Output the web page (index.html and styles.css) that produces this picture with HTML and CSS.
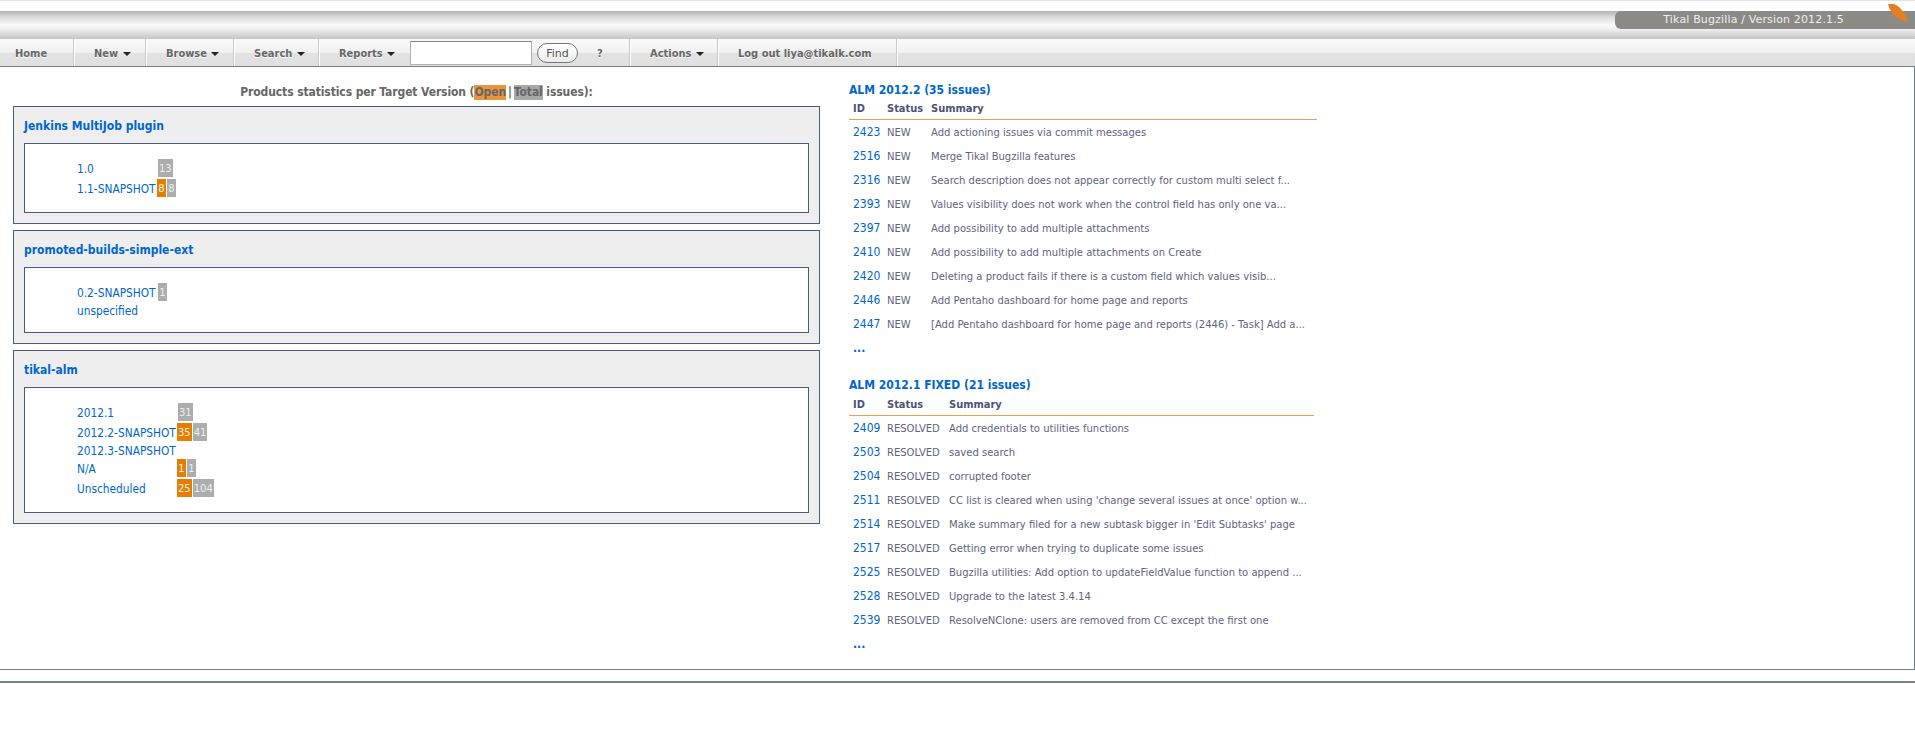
FILE: index.html
```html
<!DOCTYPE html>
<html lang="en">
<head>
  <meta charset="UTF-8">
  <title>Tikal Bugzilla</title>
  <link rel="stylesheet" href="styles.css">
</head>
<body>
  <header class="banner">
    <div class="version">Tikal Bugzilla / Version 2012.1.5</div>
    <svg class="leaf" width="22" height="20" viewBox="0 0 22 20"><path d="M1 0 L7 0 C14 3 19 10 21 18 C12 16 4 12 1 0Z" fill="#e67e22"/></svg>
  </header>
  <nav class="menu">
    <a class="item w-home">Home</a>
    <a class="item w-new">New <i class="caret"></i></a>
    <a class="item w-browse">Browse <i class="caret"></i></a>
    <a class="item w-search">Search <i class="caret"></i></a>
    <a class="item w-reports">Reports <i class="caret"></i></a>
    <input class="quick" type="text">
    <button class="find">Find</button>
    <a class="item w-help">?</a>
    <a class="item w-actions">Actions <i class="caret"></i></a>
    <a class="item w-logout">Log out liya@tikalk.com</a>
  </nav>
  <main class="content">
    <section class="left">
      <h3 class="stats-title">Products statistics per Target Version (<span class="hl-open">Open</span>|<span class="hl-total">Total</span> issues):</h3>

      <div class="product">
        <h4>Jenkins MultiJob plugin</h4>
        <div class="versions">
          <div class="row"><a class="ver">1.0</a><span class="badge total solo">13</span></div>
          <div class="row gap"><a class="ver">1.1-SNAPSHOT</a><span class="badge open">8</span><span class="badge total">8</span></div>
        </div>
      </div>

      <div class="product">
        <h4>promoted-builds-simple-ext</h4>
        <div class="versions">
          <div class="row"><a class="ver">0.2-SNAPSHOT</a><span class="badge total solo">1</span></div>
          <div class="row short"><a class="ver">unspecified</a></div>
        </div>
      </div>

      <div class="product wide">
        <h4>tikal-alm</h4>
        <div class="versions">
          <div class="row"><a class="ver">2012.1</a><span class="badge total solo">31</span></div>
          <div class="row gap"><a class="ver">2012.2-SNAPSHOT</a><span class="badge open">35</span><span class="badge total">41</span></div>
          <div class="row"><a class="ver">2012.3-SNAPSHOT</a></div>
          <div class="row"><a class="ver">N/A</a><span class="badge open">1</span><span class="badge total">1</span></div>
          <div class="row gap"><a class="ver">Unscheduled</a><span class="badge open">25</span><span class="badge total">104</span></div>
        </div>
      </div>
    </section>

    <section class="right">
      <h3 class="list-title">ALM 2012.2 (35 issues)</h3>
      <table class="issues new-list">
        <thead><tr><th class="c-id">ID</th><th class="c-status">Status</th><th>Summary</th></tr></thead>
        <tbody>
          <tr><td><a>2423</a></td><td>NEW</td><td>Add actioning issues via commit messages</td></tr>
          <tr><td><a>2516</a></td><td>NEW</td><td>Merge Tikal Bugzilla features</td></tr>
          <tr><td><a>2316</a></td><td>NEW</td><td>Search description does not appear correctly for custom multi select f...</td></tr>
          <tr><td><a>2393</a></td><td>NEW</td><td>Values visibility does not work when the control field has only one va...</td></tr>
          <tr><td><a>2397</a></td><td>NEW</td><td>Add possibility to add multiple attachments</td></tr>
          <tr><td><a>2410</a></td><td>NEW</td><td>Add possibility to add multiple attachments on Create</td></tr>
          <tr><td><a>2420</a></td><td>NEW</td><td>Deleting a product fails if there is a custom field which values visib...</td></tr>
          <tr><td><a>2446</a></td><td>NEW</td><td>Add Pentaho dashboard for home page and reports</td></tr>
          <tr><td><a>2447</a></td><td>NEW</td><td>[Add Pentaho dashboard for home page and reports (2446) - Task] Add a...</td></tr>
        </tbody>
      </table>
      <a class="more">...</a>

      <h3 class="list-title second">ALM 2012.1 FIXED (21 issues)</h3>
      <table class="issues fixed-list">
        <thead><tr><th class="c-id">ID</th><th class="c-status">Status</th><th>Summary</th></tr></thead>
        <tbody>
          <tr><td><a>2409</a></td><td>RESOLVED</td><td>Add credentials to utilities functions</td></tr>
          <tr><td><a>2503</a></td><td>RESOLVED</td><td>saved search</td></tr>
          <tr><td><a>2504</a></td><td>RESOLVED</td><td>corrupted footer</td></tr>
          <tr><td><a>2511</a></td><td>RESOLVED</td><td>CC list is cleared when using 'change several issues at once' option w...</td></tr>
          <tr><td><a>2514</a></td><td>RESOLVED</td><td>Make summary filed for a new subtask bigger in 'Edit Subtasks' page</td></tr>
          <tr><td><a>2517</a></td><td>RESOLVED</td><td>Getting error when trying to duplicate some issues</td></tr>
          <tr><td><a>2525</a></td><td>RESOLVED</td><td>Bugzilla utilities: Add option to updateFieldValue function to append ...</td></tr>
          <tr><td><a>2528</a></td><td>RESOLVED</td><td>Upgrade to the latest 3.4.14</td></tr>
          <tr><td><a>2539</a></td><td>RESOLVED</td><td>ResolveNClone: users are removed from CC except the first one</td></tr>
        </tbody>
      </table>
      <a class="more">...</a>
    </section>
  </main>
  <footer class="foot"></footer>
</body>
</html>
```

FILE: styles.css
```css
* { box-sizing: border-box; }
body {
  margin: 0;
  background: #fff;
  font-family: "DejaVu Sans Condensed", "DejaVu Sans", sans-serif;
  font-stretch: condensed;
  font-size: 12px;
  color: #666;
}

/* top banner */
.banner {
  position: relative;
  height: 39px;
  border-top: 1px solid #e4e4e4;
  padding-top: 10px;
}
.banner::before {
  content: "";
  display: block;
  height: 28px;
  background: linear-gradient(#b4b4b4, #d8d8d8 20%, #fafafa 50%, #f2f2f2 62%, #c4c4c4 100%);
}
.version {
  position: absolute;
  top: 10px;
  right: 0;
  width: 300px;
  height: 18px;
  padding-right: 71px;
  background: #8b8a85;
  border-radius: 6px 0 0 6px;
  color: #eee;
  font-family: "DejaVu Sans", sans-serif;
  font-stretch: normal;
  font-size: 11px;
  line-height: 18px;
  text-align: right;
  letter-spacing: .15px;
}
.leaf { position: absolute; top: 3px; right: 6px; }

/* menu */
.menu {
  display: flex;
  align-items: stretch;
  height: 27px;
  background: linear-gradient(#fafafa, #f0f0f0 50%, #e2e2e2 52%, #e0e0e0);
}
.item {
  display: block;
  padding-top: 8px;
  border-right: 1px solid #c9c9c9;
  box-shadow: 1px 0 0 #fff;
  font-weight: bold;
  font-size: 11px;
  color: #666;
  text-shadow: 0 1px 0 #fff;
}
.w-home { width: 74px; padding-left: 15px; }
.w-new { width: 72px; padding-left: 20px; }
.w-browse { width: 88px; padding-left: 20px; }
.w-search { width: 85px; padding-left: 20px; }
.w-reports { width: 91px; padding-left: 20px; border-right: 0; box-shadow: none; }
.w-help { width: 52px; padding-left: 19px; }
.w-actions { width: 88px; padding-left: 20px; }
.w-logout { width: 179px; padding-left: 20px; }
.caret {
  display: inline-block;
  width: 0;
  height: 0;
  margin-left: 1px;
  border: 4px solid transparent;
  border-top: 4px solid #222;
  border-bottom: 0;
  vertical-align: 1px;
}
.quick {
  width: 122px;
  height: 24px;
  margin: 2px 5px 0 0;
  border: 1px solid #b0b0b0;
  border-top-color: #888;
  background: #fff;
}
.find {
  width: 41px;
  height: 20px;
  margin: 4px 0 0;
  padding: 0;
  border: 1px solid #777;
  border-radius: 10px;
  background: linear-gradient(#fff, #ececec);
  font-family: "DejaVu Sans", sans-serif;
  font-stretch: normal;
  font-size: 11px;
  color: #555;
}

/* main frame */
.content {
  display: flex;
  align-items: flex-start;
  height: 604px;
  border-top: 1px solid #6f7f97;
  border-right: 1px solid #6f7f97;
  border-bottom: 1px solid #6f7f97;
}
.left { width: 807px; margin-left: 13px; padding-top: 18px; }
.right { width: 468px; margin-left: 29px; padding-top: 15px; }
.foot { height: 2px; margin-top: 11px; background: #77808f; }

.stats-title {
  margin: 0 0 6px;
  font-size: 12px;
  line-height: 15px;
  letter-spacing: -.1px;
  text-align: center;
  color: #666;
}
.hl-open { display: inline-block; margin-right: 2px; background: #e8963c; }
.hl-total { display: inline-block; margin-left: 2px; background: #a8a8a8; }

/* product boxes */
.product {
  margin-bottom: 6px;
  padding: 10px;
  background: #eee;
  border: 1px solid #4c5a80;
}
.product h4 {
  margin: 0 0 8px;
  font-size: 12px;
  line-height: 18px;
  color: #0066cc;
}
.versions {
  padding: 15px 0 15px 52px;
  background: #fff;
  border: 1px solid #4c5a80;
}
.row { display: flex; height: 18px; line-height: 20px; }
.row.gap { margin-top: 2px; }
.row.short { height: 16px; }
.ver { width: 80px; font-size: 11.8px; color: #0066cc; white-space: nowrap; }
.wide .ver { width: 100px; }
.badge {
  height: 18px;
  min-width: 9px;
  padding: 0 1px;
  margin-right: 1px;
  color: #eee;
  font-family: "DejaVu Sans", sans-serif;
  font-stretch: normal;
  font-size: 10px;
  text-align: center;
}
.badge.open { background: #e67e00; }
.badge.total { background: #adadad; }
.badge.solo { margin-left: 1px; }

/* issue lists */
.list-title {
  margin: 0 0 2px;
  font-size: 12px;
  line-height: 16px;
  color: #0066cc;
}
.list-title.second { margin: 18px 0 3px; }
.issues {
  border-collapse: collapse;
  table-layout: fixed;
  font-family: "DejaVu Sans", sans-serif;
  font-stretch: normal;
  font-size: 10px;
  color: #5c6484;
}
.new-list { width: 468px; }
.fixed-list { width: 465px; }
.issues th {
  height: 19px;
  padding: 0 0 1px 4px;
  border-bottom: 1px solid #e8a050;
  text-align: left;
  font-family: "DejaVu Sans Condensed", "DejaVu Sans", sans-serif;
  font-stretch: condensed;
  font-size: 11px;
  color: #4c5475;
}
.issues td { height: 24px; padding: 2px 0 0 4px; white-space: nowrap; }
.issues td a {
  font-family: "DejaVu Sans Condensed", "DejaVu Sans", sans-serif;
  font-stretch: condensed;
  font-size: 12px;
  color: #0066cc;
}
.new-list .c-id { width: 34px; }
.new-list .c-status { width: 44px; }
.fixed-list .c-id { width: 34px; }
.fixed-list .c-status { width: 62px; }
.more {
  display: block;
  height: 24px;
  padding-left: 4px;
  font-weight: bold;
  line-height: 26px;
  color: #0066cc;
}
```
